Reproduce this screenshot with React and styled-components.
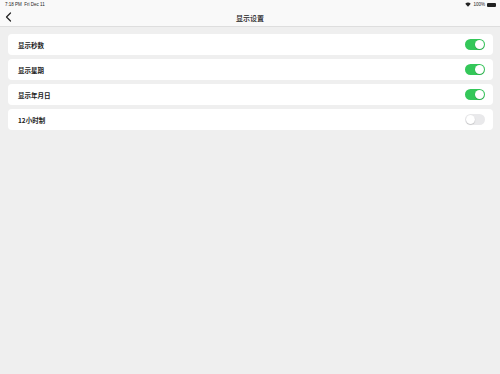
import React, { useState } from 'react';
import styled, { createGlobalStyle } from 'styled-components';

const GlobalStyle = createGlobalStyle`
  html, body {
    margin: 0;
    padding: 0;
    background: #efefef;
    font-family: "Noto Sans CJK SC", "Liberation Sans", sans-serif;
  }
`;

const Page = styled.div`
  width: 500px;
  height: 374px;
  display: flex;
  flex-direction: column;
  background: #efefef;
  overflow: hidden;
`;

const Header = styled.div`
  background: #f9f9f9;
  border-bottom: 1px solid #dedede;
`;

const StatusBar = styled.div`
  height: 9px;
  display: flex;
  align-items: center;
  justify-content: space-between;
  padding: 0 4px 0 5px;
  font-family: "Liberation Sans", sans-serif;
  font-size: 4.5px;
  color: #222;
`;

const StatusRight = styled.div`
  display: flex;
  align-items: center;
  gap: 2px;
`;

const Battery = styled.div`
  width: 9px;
  height: 4px;
  background: #222;
  border-radius: 1px;
`;

const NavBar = styled.div`
  height: 17px;
  display: flex;
  align-items: center;
  justify-content: center;
  position: relative;
`;

const BackButton = styled.div`
  position: absolute;
  left: 5px;
  top: 3px;
  display: flex;
`;

const Title = styled.div`
  font-size: 7px;
  font-weight: 500;
  color: #222;
`;

const List = styled.div`
  display: flex;
  flex-direction: column;
  gap: 4px;
  padding: 7px 7px 0 8px;
`;

const Row = styled.div`
  height: 21px;
  background: #fff;
  border-radius: 4px;
  display: flex;
  align-items: center;
  justify-content: space-between;
  padding: 0 8px 0 10px;
`;

const Label = styled.div`
  font-size: 6.5px;
  font-weight: 700;
  color: #222;
`;

const Switch = styled.div`
  width: 20px;
  height: 11px;
  border-radius: 6px;
  background: ${p => (p.on ? '#34c759' : '#e9e9eb')};
  position: relative;
  cursor: pointer;
`;

const Knob = styled.div`
  position: absolute;
  top: 1px;
  left: ${p => (p.on ? '10px' : '1px')};
  width: 9px;
  height: 9px;
  border-radius: 50%;
  background: #fff;
  box-shadow: 0 0.5px 1px rgba(0, 0, 0, 0.25);
`;

const rows = [
  { label: '显示秒数', on: true },
  { label: '显示星期', on: true },
  { label: '显示年月日', on: true },
  { label: '12小时制', on: false },
];

export default function App() {
  const [state, setState] = useState(rows.map(r => r.on));

  return (
    <Page>
      <GlobalStyle />
      <Header>
        <StatusBar>
          <span>7:18 PM&nbsp;&nbsp;Fri Dec 11</span>
          <StatusRight>
            <svg width="6" height="5" viewBox="0 0 12 10">
              <path d="M6 9.5L0.5 3.5a8 8 0 0 1 11 0z" fill="#222" />
            </svg>
            <span>100%</span>
            <Battery />
          </StatusRight>
        </StatusBar>
        <NavBar>
          <BackButton>
            <svg width="7" height="10" viewBox="0 0 7 10">
              <path d="M5.5 1L1.5 5l4 4" stroke="#222" strokeWidth="1.2" fill="none" strokeLinecap="round" strokeLinejoin="round" />
            </svg>
          </BackButton>
          <Title>显示设置</Title>
        </NavBar>
      </Header>
      <List>
        {rows.map((r, i) => (
          <Row key={r.label}>
            <Label>{r.label}</Label>
            <Switch
              on={state[i]}
              onClick={() => setState(s => s.map((v, j) => (j === i ? !v : v)))}
            >
              <Knob on={state[i]} />
            </Switch>
          </Row>
        ))}
      </List>
    </Page>
  );
}
